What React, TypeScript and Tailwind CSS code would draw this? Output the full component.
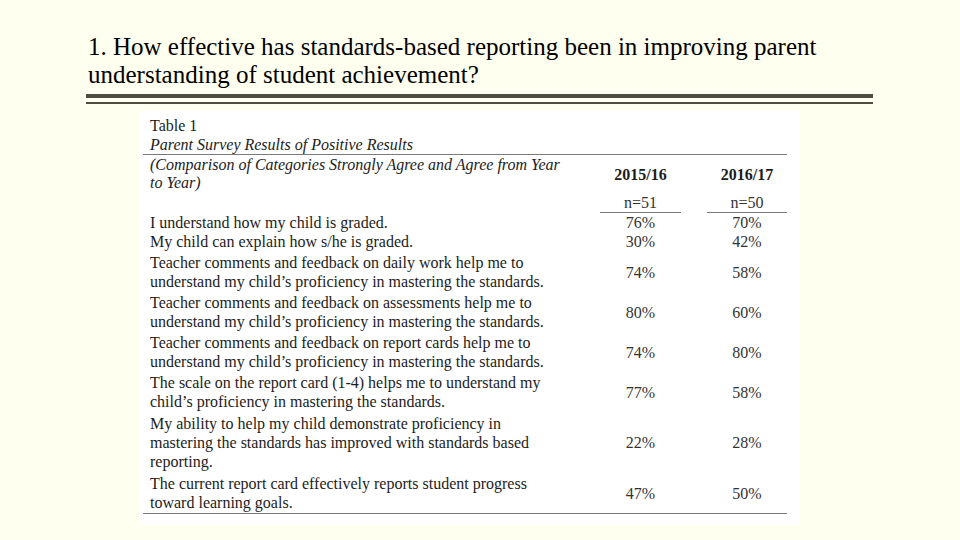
const rows = [
  { lines: ["I understand how my child is graded."], a: "76%", b: "70%", gap: "" },
  { lines: ["My child can explain how s/he is graded."], a: "30%", b: "42%", gap: "" },
  {
    lines: ["Teacher comments and feedback on daily work help me to", "understand my child’s proficiency in mastering the standards."],
    a: "74%",
    b: "58%",
    gap: "mt-[2px]",
  },
  {
    lines: ["Teacher comments and feedback on assessments help me to", "understand my child’s proficiency in mastering the standards."],
    a: "80%",
    b: "60%",
    gap: "mt-[2px]",
  },
  {
    lines: ["Teacher comments and feedback on report cards help me to", "understand my child’s proficiency in mastering the standards."],
    a: "74%",
    b: "80%",
    gap: "mt-[2px]",
  },
  {
    lines: ["The scale on the report card (1-4) helps me to understand my", "child’s proficiency in mastering the standards."],
    a: "77%",
    b: "58%",
    gap: "mt-[2px]",
  },
  {
    lines: ["My ability to help my child demonstrate proficiency in", "mastering the standards has improved with standards based", "reporting."],
    a: "22%",
    b: "28%",
    gap: "mt-[3px]",
  },
  {
    lines: ["The current report card effectively reports student progress", "toward learning goals."],
    a: "47%",
    b: "50%",
    gap: "mt-[3px]",
  },
]

function App() {
  return (
    <div className="w-[960px] h-[540px] bg-[#fffff0] overflow-hidden font-['Liberation_Serif',serif] text-[#111]">
      <h1 className="pl-[88px] pt-[33px] text-[25px] leading-[28px] text-black">
        1. How effective has standards-based reporting been in improving parent
        <br />
        understanding of student achievement?
      </h1>

      {/* double rule */}
      <div className="ml-[86px] w-[787px] mt-[5px]">
        <div className="h-[4px] bg-[#4f4d40]" />
        <div className="h-[2px] mt-[4px] bg-[#4f4d40]" />
      </div>

      {/* table picture */}
      <div className="ml-[139px] w-[661px] h-[414px] mt-[7px] bg-white pl-[4px] pt-[5px] text-[16px] leading-[19px] text-[#1c1c1c]">
        <div className="w-[644px]">
          <div className="pl-[7px]">Table 1</div>
          <div className="pl-[7px] italic border-b border-[#7a7a7a]">Parent Survey Results of Positive Results</div>

          <div className="flex items-center">
            <div className="w-[457px] pl-[7px] italic leading-[18px] py-[1px]">
              (Comparison of Categories Strongly Agree and Agree from Year
              <br />
              to Year)
            </div>
            <div className="w-[81px] text-center font-bold">2015/16</div>
            <div className="w-[26px]" />
            <div className="w-[80px] text-center font-bold">2016/17</div>
          </div>

          <div className="flex">
            <div className="w-[457px]" />
            <div className="w-[81px] text-center text-[#333] border-b border-[#7a7a7a]">n=51</div>
            <div className="w-[26px]" />
            <div className="w-[80px] text-center text-[#333] border-b border-[#7a7a7a]">n=50</div>
          </div>

          <div className="border-b border-[#7a7a7a] pb-[1px]">
            {rows.map((r, i) => (
              <div key={i} className={`flex items-center ${r.gap}`}>
                <div className="w-[457px] pl-[7px]">
                  {r.lines.map((l, j) => (
                    <div key={j}>{l}</div>
                  ))}
                </div>
                <div className="w-[81px] text-center text-[#333]">{r.a}</div>
                <div className="w-[26px]" />
                <div className="w-[80px] text-center text-[#333]">{r.b}</div>
              </div>
            ))}
          </div>
        </div>
      </div>
    </div>
  )
}

export default App
